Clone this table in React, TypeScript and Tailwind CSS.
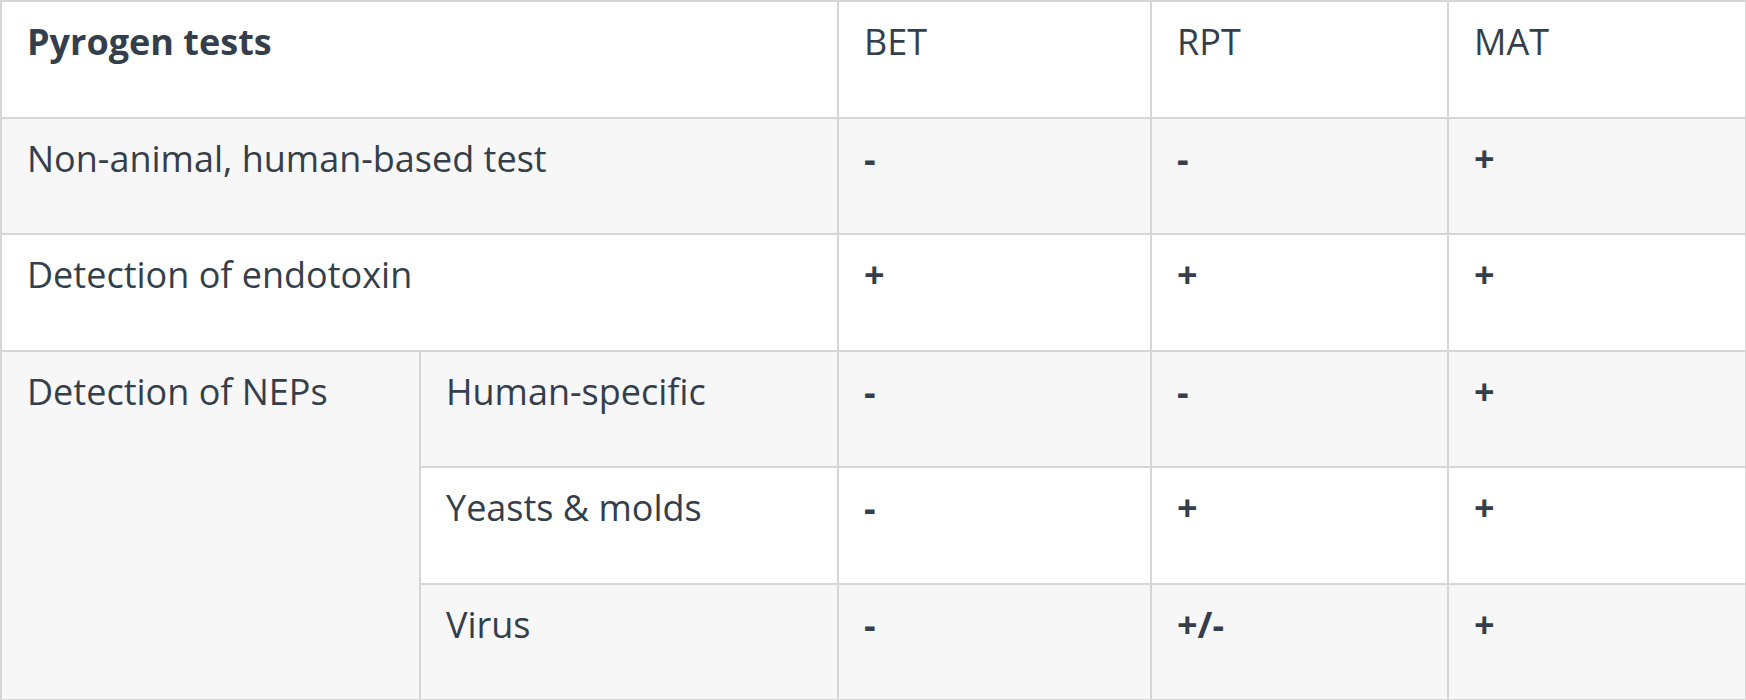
import React from "react";

const cellBase =
  "border-2 border-[#d6d6d6] align-top pl-[25px] pr-[27px] pt-[13px] text-left";

function Val({ v }: { v: string }) {
  return <td className={`${cellBase} font-bold`}>{v}</td>;
}

export default function App() {
  return (
    <div className="bg-white w-[1746px] h-[700px] overflow-hidden">
      <table
        className="table-fixed border-collapse w-[1745px] text-[36px] leading-[54px] text-[#343f4b]"
        style={{ fontFamily: '"Open Sans", "Noto Sans", sans-serif' }}
      >
        <colgroup>
          <col className="w-[419px]" />
          <col className="w-[418px]" />
          <col className="w-[313px]" />
          <col className="w-[297px]" />
          <col className="w-[298px]" />
        </colgroup>
        <tbody>
          <tr className="h-[116.5px] bg-white">
            <td colSpan={2} className={`${cellBase} font-bold`}>
              Pyrogen tests
            </td>
            <td className={cellBase}>BET</td>
            <td className={cellBase}>RPT</td>
            <td className={cellBase}>MAT</td>
          </tr>
          <tr className="h-[116.5px] bg-[#f7f7f7]">
            <td colSpan={2} className={cellBase}>
              Non-animal, human-based test
            </td>
            <Val v="-" />
            <Val v="-" />
            <Val v="+" />
          </tr>
          <tr className="h-[116.5px] bg-white">
            <td colSpan={2} className={cellBase}>
              Detection of endotoxin
            </td>
            <Val v="+" />
            <Val v="+" />
            <Val v="+" />
          </tr>
          <tr className="h-[116.5px] bg-[#f7f7f7]">
            <td rowSpan={3} className={`${cellBase} bg-[#f7f7f7]`}>
              Detection of NEPs
            </td>
            <td className={cellBase}>Human-specific</td>
            <Val v="-" />
            <Val v="-" />
            <Val v="+" />
          </tr>
          <tr className="h-[116.5px] bg-white">
            <td className={cellBase}>Yeasts &amp; molds</td>
            <Val v="-" />
            <Val v="+" />
            <Val v="+" />
          </tr>
          <tr className="h-[116.5px] bg-[#f7f7f7]">
            <td className={cellBase}>Virus</td>
            <Val v="-" />
            <Val v="+/-" />
            <Val v="+" />
          </tr>
        </tbody>
      </table>
    </div>
  );
}
